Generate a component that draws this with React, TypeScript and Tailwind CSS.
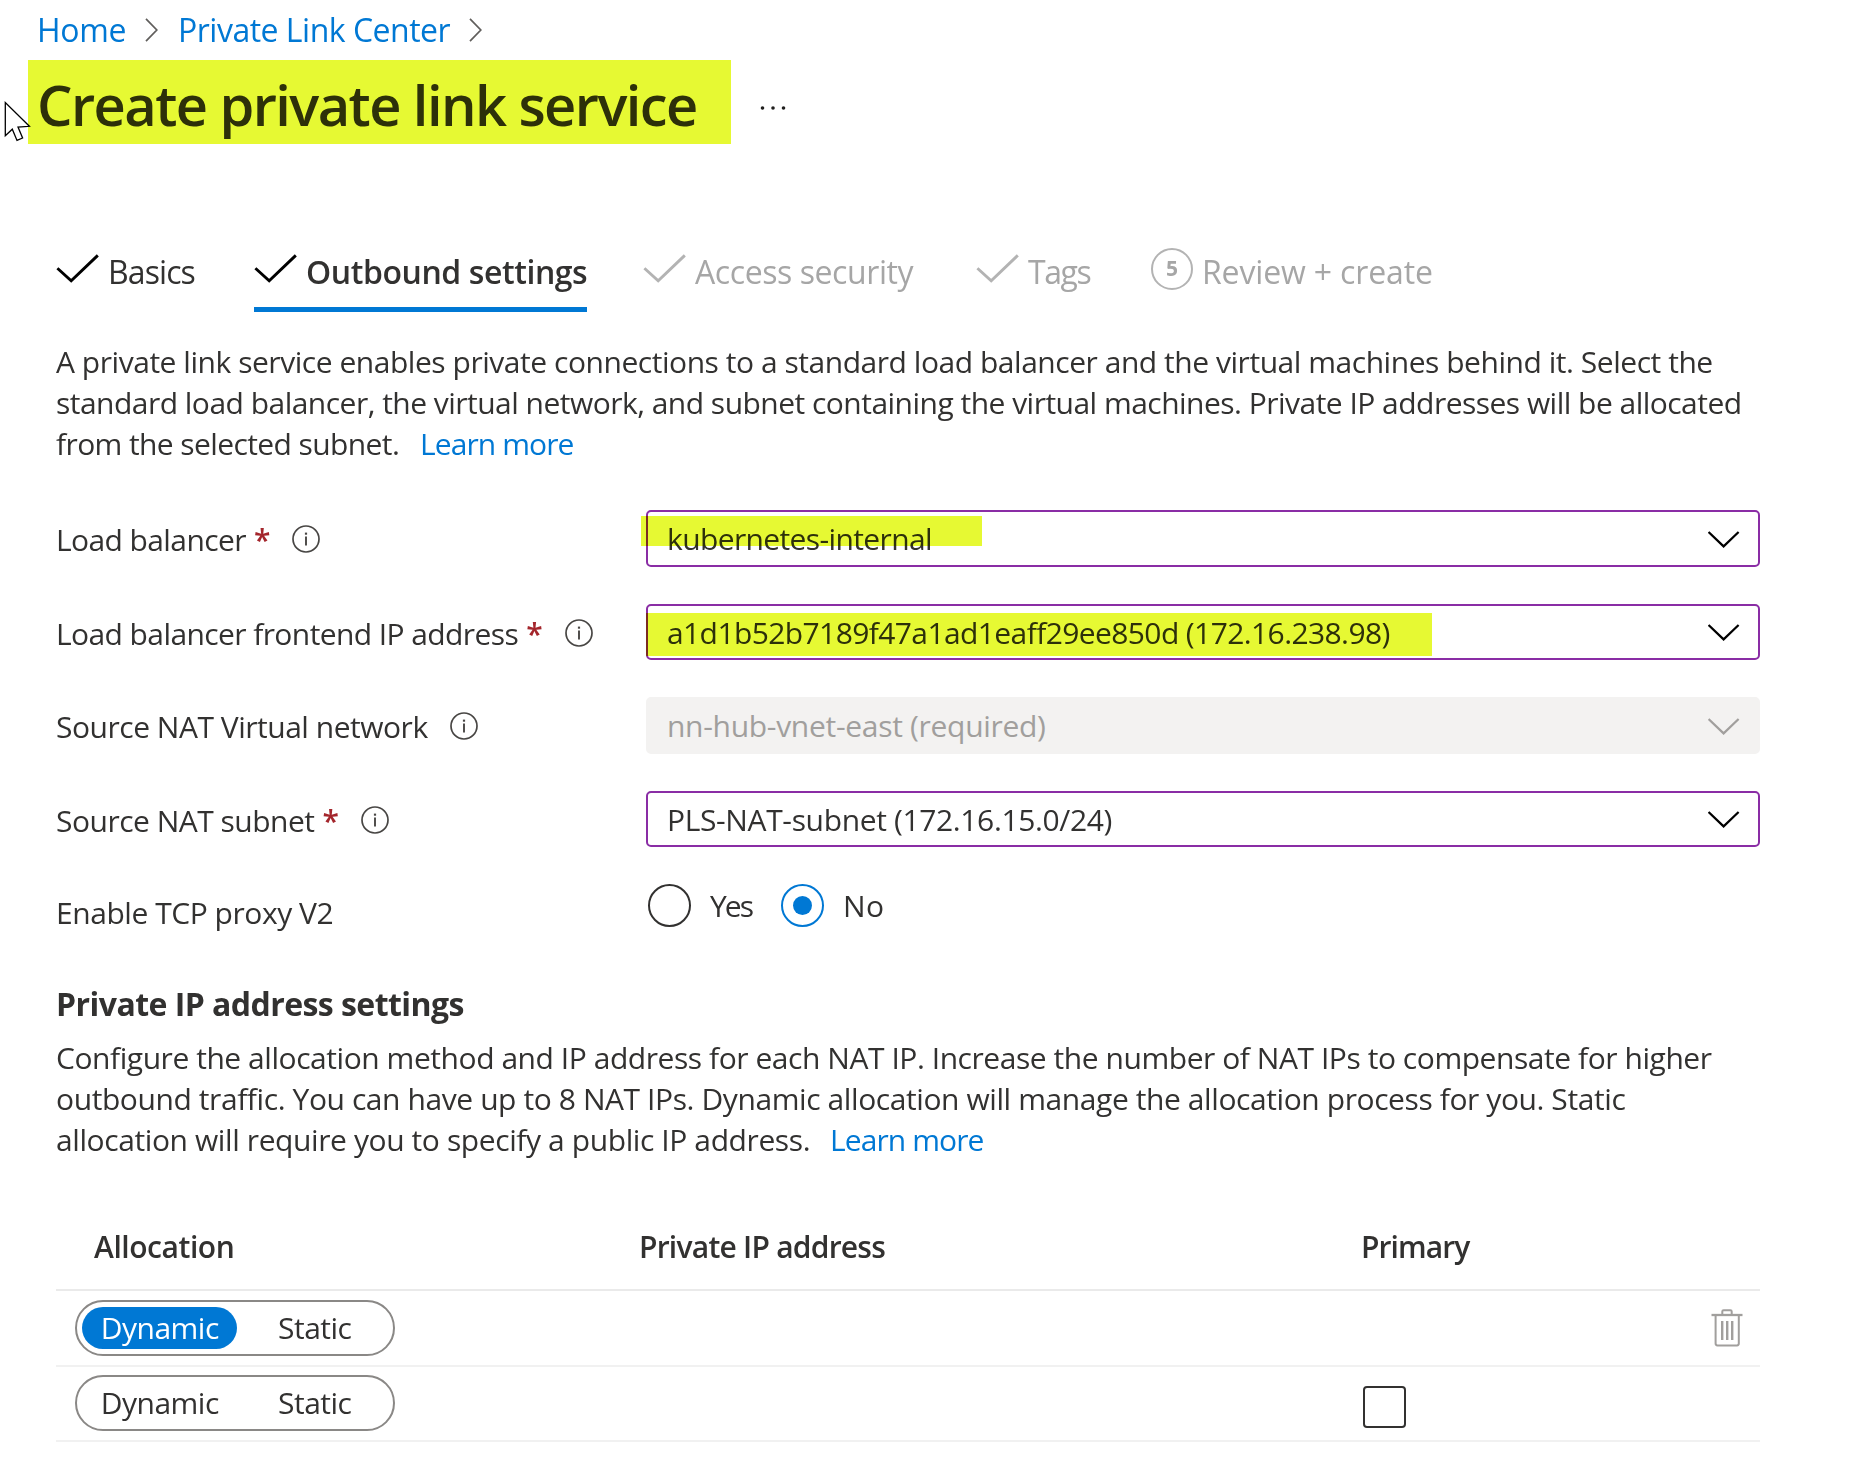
import type { ReactNode } from 'react';

function Crumb() {
  return (
    <svg className="h-6 w-[13px] shrink-0" viewBox="0 0 13 24" fill="none" stroke="#605e5c" strokeWidth="1.7">
      <path d="M1 0.8 L11.8 12 L1 23.2" />
    </svg>
  );
}

function Cursor() {
  return (
    <svg className="absolute left-1 top-[100px] h-[42px] w-7" viewBox="0 0 28 42" fill="#fff" stroke="#000" strokeWidth="1.3">
      <path d="M1.3 2.5 V35.7 L8.3 29.2 L13 40.4 L18.6 38 L14 27 L25.4 26.3 Z" />
    </svg>
  );
}

function Check({ color }: { color: string }) {
  return (
    <svg className="mb-1.5 h-[30px] w-[43px] shrink-0" viewBox="0 0 43 30" fill="none" stroke={color} strokeWidth="2.9">
      <path d="M1.4 15.2 L15.2 27.8 L41.8 2.4" />
    </svg>
  );
}

function Info() {
  return (
    <svg className="mt-px h-7 w-7 shrink-0" viewBox="0 0 28 28" fill="none" stroke="#484644" strokeWidth="1.7">
      <circle cx="14" cy="14" r="13" />
      <path d="M14 11.4 V20.4" strokeWidth="1.9" />
      <path d="M14 7.6 V9.7" strokeWidth="2.2" />
    </svg>
  );
}

function Chevron({ color }: { color: string }) {
  return (
    <svg className="mt-px h-[17px] w-8 shrink-0" viewBox="0 0 32 17" fill="none" stroke={color} strokeWidth="2.2">
      <path d="M0.6 1 L15.6 15.4 L30.6 1" />
    </svg>
  );
}

function Trash() {
  return (
    <svg className="h-[38px] w-8" viewBox="0 0 32 38" fill="none" stroke="#a19f9d" strokeWidth="2">
      <path d="M0.5 6 H31.5" strokeWidth="2.3" />
      <path d="M11.3 6 V2.5 Q11.3 1.2 12.6 1.2 H19.4 Q20.7 1.2 20.7 2.5 V6" />
      <path d="M4.6 6 V34.6 Q4.6 36.4 6.4 36.4 H26 Q27.8 36.4 27.8 34.6 V6" />
      <path d="M11.2 12 V31 M16.2 12 V31 M21.2 12 V31" strokeWidth="2.4" />
    </svg>
  );
}

function Field({ label, gap, required, field }: { label: ReactNode; gap: string; required?: boolean; field: ReactNode }) {
  return (
    <div className="grid grid-cols-[590px_1114px]">
      <div className="flex items-center">
        <span className="pt-0.5">{label}</span>
        {required && <span className="ml-2 pt-0.5 font-semibold text-[#a4262c]">*</span>}
        <span className={gap}>
          <Info />
        </span>
      </div>
      {field}
    </div>
  );
}

function Select({ box, children, mark, disabled }: { box: string; children: ReactNode; mark?: string; disabled?: boolean }) {
  return (
    <div
      className={`relative flex items-center justify-between rounded-[5px] border-2 pl-[19px] pr-[18px] ${box} ${
        disabled ? 'border-[#f3f2f1] bg-[#f3f2f1] text-[#a19f9d]' : 'border-[#8a2da5]'
      }`}
    >
      {children}
      <Chevron color={disabled ? '#a19f9d' : '#000'} />
      {mark && <span className={`absolute bg-[#e6f933] mix-blend-multiply ${mark}`} />}
    </div>
  );
}

function Pill({ selected }: { selected?: boolean }) {
  return (
    <div className="ml-[19px] flex h-14 w-80 items-center rounded-full border-2 border-[#8a8886] pl-[5px]">
      <span
        className={`flex h-[42px] w-[155px] items-center justify-center rounded-full pb-0.5 pl-px tracking-[-0.5px] ${
          selected ? 'bg-[#0078d4] text-white' : ''
        }`}
      >
        Dynamic
      </span>
      <span className="w-[157px] pb-0.5 text-center tracking-[-0.5px]">Static</span>
    </div>
  );
}

export default function App() {
  return (
    <div className="relative h-[1476px] w-[1864px] overflow-hidden bg-white font-['Open_Sans','Noto_Sans',sans-serif] text-[30px] leading-[41px] text-[#323130]">
      <nav className="flex h-[60px] items-center pl-[37px] text-[32px] text-[#0078d4]">
        <a className="w-[108px] pb-0.5 tracking-[-0.3px]">Home</a>
        <Crumb />
        <a className="ml-5 w-[291px] pb-0.5 tracking-[-0.5px]">Private Link Center</a>
        <Crumb />
      </nav>

      <div className="flex h-[84px] items-center pl-7">
        <h1 className="flex h-[84px] w-[703px] items-center whitespace-nowrap bg-[#e6f933] pl-[9px] pt-1 text-[56px] font-semibold leading-[80px] tracking-[-1.57px] text-[#2d3009]">
          Create private link service
        </h1>
        <svg className="ml-7 mt-3 h-2 w-7" viewBox="0 0 28 8" fill="#201f1e">
          <circle cx="3.5" cy="4" r="1.8" />
          <circle cx="14" cy="4" r="1.8" />
          <circle cx="24.5" cy="4" r="1.8" />
        </svg>
      </div>
      <Cursor />

      <main className="w-[1760px] pl-14">
        <div className="mt-24 grid h-[72px] grid-cols-[198px_389px_333px_176px_auto] whitespace-nowrap text-[32px]">
          <div className="flex items-center gap-2 pb-2.5">
            <Check color="#000" />
            <span className="ml-px tracking-[-0.9px]">Basics</span>
          </div>
          <div className="flex w-[333px] items-center gap-2 border-b-[5px] border-[#0078d4] pb-[5px] font-semibold">
            <Check color="#000" />
            <span className="ml-px tracking-[-0.42px]">Outbound settings</span>
          </div>
          <div className="flex items-center gap-2 pb-2.5 text-[#a6a6a6]">
            <Check color="#b3b3b3" />
            <span className="ml-px tracking-[-0.42px]">Access security</span>
          </div>
          <div className="flex items-center gap-2 pb-2.5 text-[#a6a6a6]">
            <Check color="#b3b3b3" />
            <span className="ml-px tracking-[-1.4px]">Tags</span>
          </div>
          <div className="flex items-center pb-2.5 text-[#a6a6a6]">
            <span className="mb-[5px] ml-[-1px] flex h-[42px] w-[42px] items-center justify-center rounded-full border-2 border-[#b3b3b3] text-[21px] font-bold leading-none">
              5
            </span>
            <span className="ml-[9px] tracking-[-0.15px]">Review + create</span>
          </div>
        </div>

        <p className="mt-[29px] whitespace-nowrap">
          <span className="block tracking-[-0.46px]">
            A private link service enables private connections to a standard load balancer and the virtual machines behind it. Select the
          </span>
          <span className="block tracking-[-0.52px]">
            standard load balancer, the virtual network, and subnet containing the virtual machines. Private IP addresses will be allocated
          </span>
          <span className="inline-block w-[364px] tracking-[-0.6px]">from the selected subnet.</span>
          <a className="tracking-[-0.9px] text-[#0078d4]">Learn more</a>
        </p>

        <div className="mt-[46px] flex flex-col gap-[37px] whitespace-nowrap">
          <Field
            label={<span className="tracking-[-0.6px]">Load balancer</span>}
            required
            gap="ml-[22px]"
            field={
              <Select box="h-[57px]" mark="left-[-7px] top-1 h-[30px] w-[341px]">
                <span className="tracking-[-0.62px]">kubernetes-internal</span>
              </Select>
            }
          />
          <Field
            label={<span className="tracking-[-0.59px]">Load balancer frontend IP address</span>}
            required
            gap="ml-[22px]"
            field={
              <Select box="h-14" mark="-left-0.5 top-[7px] h-[43px] w-[786px]">
                <span className="tracking-[-0.6px]">a1d1b52b7189f47a1ad1eaff29ee850d (172.16.238.98)</span>
              </Select>
            }
          />
          <Field
            label={<span className="tracking-[-0.48px]">Source NAT Virtual network</span>}
            gap="ml-[22px]"
            field={
              <Select box="h-[57px]" disabled>
                <span className="tracking-[-0.3px]">nn-hub-vnet-east (required)</span>
              </Select>
            }
          />
          <Field
            label={<span className="tracking-[-0.5px]">Source NAT subnet</span>}
            required
            gap="ml-[22px]"
            field={
              <Select box="h-14">
                <span className="tracking-[-0.36px]">PLS-NAT-subnet (172.16.15.0/24)</span>
              </Select>
            }
          />
          <div className="grid h-[43px] grid-cols-[591px_134px_auto] grid-rows-[43px] items-center">
            <span className="pt-3.5 tracking-[-0.45px]">Enable TCP proxy V2</span>
            <label className="flex items-center gap-[19px] pl-px">
              <span className="h-[43px] w-[43px] rounded-full border-2 border-[#323130]" />
              <span className="tracking-[-1.9px]">Yes</span>
            </label>
            <label className="flex items-center gap-[19px]">
              <span className="flex h-[43px] w-[43px] items-center justify-center rounded-full border-2 border-[#0078d4]">
                <span className="h-[19px] w-[19px] rounded-full bg-[#0078d4]" />
              </span>
              <span className="tracking-[0.5px]">No</span>
            </label>
          </div>
        </div>

        <h2 className="mt-[55px] text-[32px] font-bold leading-[44px] tracking-[-0.55px]">Private IP address settings</h2>
        <p className="mt-[11px] whitespace-nowrap">
          <span className="block tracking-[-0.445px]">
            Configure the allocation method and IP address for each NAT IP. Increase the number of NAT IPs to compensate for higher
          </span>
          <span className="block tracking-[-0.41px]">
            outbound traffic. You can have up to 8 NAT IPs. Dynamic allocation will manage the allocation process for you. Static
          </span>
          <span className="inline-block w-[774px] tracking-[-0.4px]">allocation will require you to specify a public IP address.</span>
          <a className="tracking-[-0.9px] text-[#0078d4]">Learn more</a>
        </p>

        <div className="mt-[43px]">
          <div className="grid h-[88px] grid-cols-[583px_722px_1fr] items-center border-b-2 border-[#eaeaea] font-semibold">
            <span className="pl-[38px] tracking-[-0.45px]">Allocation</span>
            <span className="tracking-[-0.76px]">Private IP address</span>
            <span className="tracking-[-0.9px]">Primary</span>
          </div>
          <div className="grid h-[76px] grid-cols-[580px_724px_1fr] items-center border-b-2 border-[#f1f1f1]">
            <Pill selected />
            <span />
            <span className="flex justify-end pr-[17px]">
              <Trash />
            </span>
          </div>
          <div className="grid h-[75px] grid-cols-[580px_724px_1fr] grid-rows-[72px] items-center border-b-2 border-[#f1f1f1]">
            <Pill />
            <span />
            <span className="ml-[3px] mt-2 h-[42px] w-[43px] rounded border-2 border-[#323130]" />
          </div>
        </div>
      </main>
    </div>
  );
}
